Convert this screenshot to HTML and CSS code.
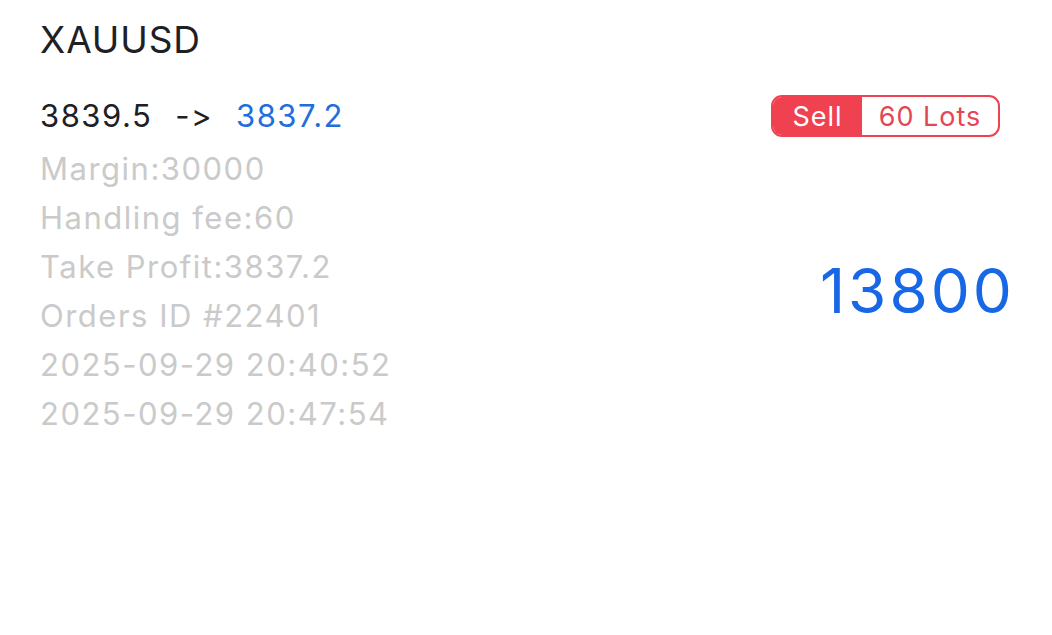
FILE: index.html
```html
<!DOCTYPE html>
<html>
<head>
<meta charset="utf-8">
<link rel="stylesheet" href="styles.css">
</head>
<body>
<div class="card">
  <div class="symbol">XAUUSD</div>
  <div class="grid">
    <div class="prices">
      <span class="open">3839.5</span>
      <span class="arrow">-&gt;</span>
      <span class="close">3837.2</span>
    </div>
    <div class="badge">
      <span class="side">Sell</span>
      <span class="lots">60 Lots</span>
    </div>
    <div class="details">
      <div class="row">Margin:30000</div>
      <div class="row">Handling fee:60</div>
      <div class="row">Take Profit:3837.2</div>
      <div class="row">Orders ID #22401</div>
      <div class="row">2025-09-29 20:40:52</div>
      <div class="row">2025-09-29 20:47:54</div>
    </div>
    <div class="amount">13800</div>
  </div>
</div>
</body>
</html>
```

FILE: styles.css
```css
html, body {
  margin: 0;
  padding: 0;
  background: #ffffff;
}
body {
  font-family: Inter, "Noto Sans", "Liberation Sans", sans-serif;
  font-feature-settings: "calt" 0, "liga" 0;
  width: 1052px;
  height: 635px;
  overflow: hidden;
}
.card {
  padding: 18px 40px 0 40px;
}
.symbol {
  font-size: 37px;
  line-height: 44px;
  color: #1d2025;
  letter-spacing: 0.9px;
}
.grid {
  display: grid;
  grid-template-columns: 1fr auto;
  margin-top: 32px;
}
.prices {
  font-size: 31px;
  line-height: 44px;
  color: #1d2025;
  display: flex;
  align-items: center;
  gap: 23px;
  letter-spacing: 1.5px;
}
.close {
  color: #1f6ee0;
}
.badge {
  display: flex;
  align-self: center;
  height: 42px;
  box-sizing: border-box;
  border: 2px solid #ef4150;
  border-radius: 11px;
  overflow: hidden;
  margin-right: 12px;
  font-size: 27px;
  letter-spacing: 1px;
}
.side {
  background: #ef4150;
  color: #ffffff;
  width: 89px;
  display: flex;
  align-items: center;
  justify-content: center;
}
.lots {
  color: #e44655;
  width: 136px;
  display: flex;
  align-items: center;
  justify-content: center;
}
.details {
  margin-top: 6px;
  color: #cacaca;
  font-size: 31px;
  letter-spacing: 1.5px;
}
.row {
  line-height: 49px;
}
.amount {
  align-self: center;
  justify-self: end;
  font-size: 62px;
  color: #1767e6;
  margin-top: 4px;
  letter-spacing: 3px;
  margin-right: -3px;
}
```
